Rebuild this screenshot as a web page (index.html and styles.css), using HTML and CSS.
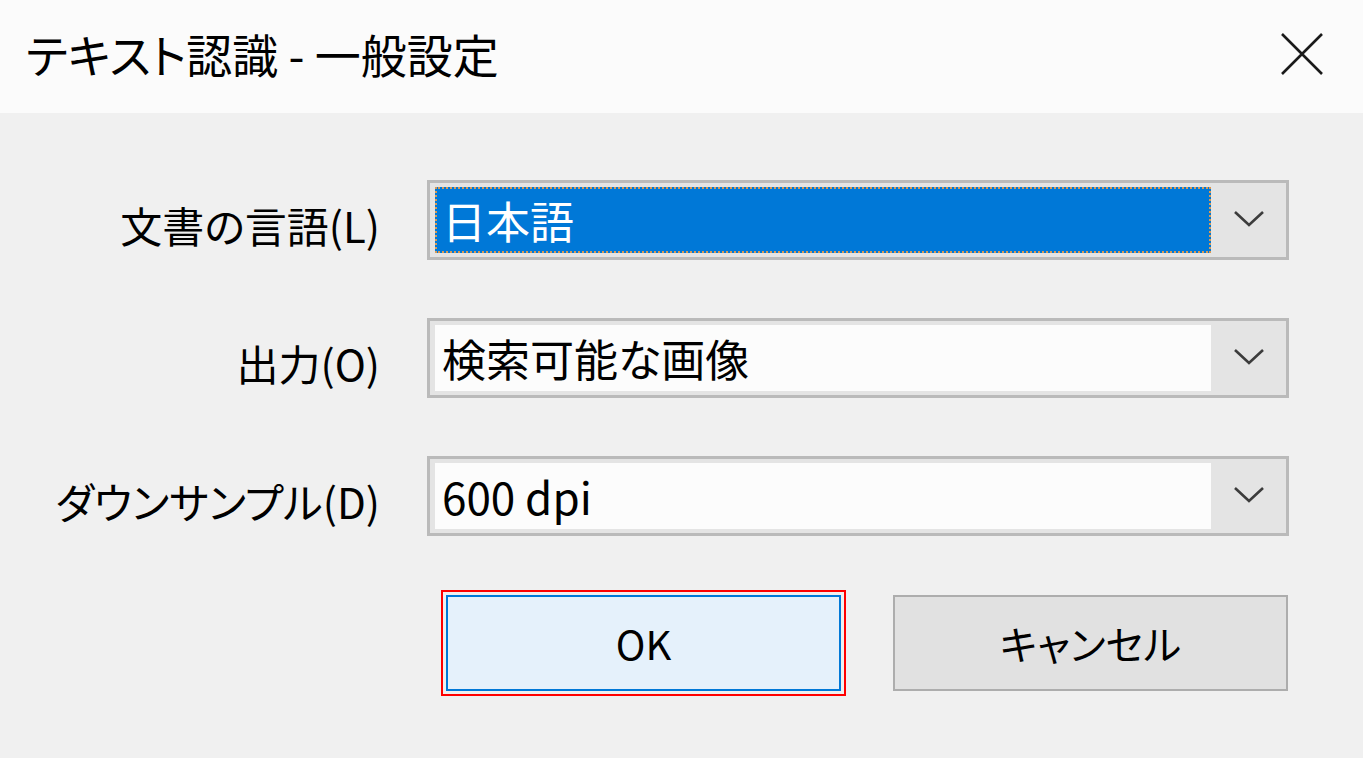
FILE: index.html
```html
<!DOCTYPE html>
<html lang="ja">
<head>
<meta charset="utf-8">
<title>テキスト認識 - 一般設定</title>
<link rel="stylesheet" href="styles.css">
</head>
<body>
<div class="titlebar">
  <div class="title">テキスト認識 - 一般設定</div>
  <div class="close">
    <svg width="42" height="42" viewBox="0 0 42 42"><path d="M1 1 L41 41 M41 1 L1 41" stroke="#1a1a1a" stroke-width="2.6" fill="none"/></svg>
  </div>
</div>
<div class="content">
  <div class="form">
    <div class="label">文書の言語(L)</div>
    <div class="combo">
      <div class="value selected">日本語</div>
      <div class="arrow"><svg width="32" height="18" viewBox="0 0 32 18"><path d="M2 2 L16 15 L30 2" stroke="#3c3c3c" stroke-width="2.6" fill="none"/></svg></div>
    </div>
    <div class="label">出力(O)</div>
    <div class="combo">
      <div class="value">検索可能な画像</div>
      <div class="arrow"><svg width="32" height="18" viewBox="0 0 32 18"><path d="M2 2 L16 15 L30 2" stroke="#3c3c3c" stroke-width="2.6" fill="none"/></svg></div>
    </div>
    <div class="label">ダウンサンプル(D)</div>
    <div class="combo">
      <div class="value">600 dpi</div>
      <div class="arrow"><svg width="32" height="18" viewBox="0 0 32 18"><path d="M2 2 L16 15 L30 2" stroke="#3c3c3c" stroke-width="2.6" fill="none"/></svg></div>
    </div>
  </div>
  <div class="buttons">
    <div class="btn ok">OK</div>
    <div class="btn cancel">キャンセル</div>
  </div>
</div>
</body>
</html>
```

FILE: styles.css
```css
html, body {
  margin: 0;
  padding: 0;
}
body {
  width: 1363px;
  height: 758px;
  overflow: hidden;
  background: #f0f0f0;
  font-family: "Noto Sans CJK JP", "Noto Sans", sans-serif;
  font-feature-settings: "palt";
  color: #000;
}
.titlebar {
  height: 113px;
  background: #fbfbfb;
  display: flex;
  align-items: center;
  justify-content: space-between;
  box-sizing: border-box;
  padding: 0 40px 0 26px;
}
.title {
  font-size: 46px;
  line-height: 1;
  padding-bottom: 8px;
}
.close {
  display: flex;
  width: 42px;
  height: 42px;
  margin-top: -6px;
}
.content {
  padding-top: 67px;
}
.form {
  display: grid;
  grid-template-columns: 380px 862px;
  grid-auto-rows: 80px;
  column-gap: 47px;
  row-gap: 58px;
}
.label {
  font-size: 42px;
  text-align: right;
  display: flex;
  align-items: center;
  justify-content: flex-end;
  padding-top: 10px;
  line-height: 1;
}
.combo {
  box-sizing: border-box;
  border: 3px solid #bababa;
  background: #e4e4e4;
  display: flex;
  align-items: stretch;
  padding: 4px 0 4px 5px;
}
.value {
  width: 776px;
  background: #fcfcfc;
  font-size: 44px;
  display: flex;
  align-items: center;
  padding-left: 7px;
  box-sizing: border-box;
  line-height: 1;
}
.value.selected {
  background: #0078d7;
  color: #fff;
  outline: 2px dotted #d89a55;
  outline-offset: -2px;
}
.arrow {
  flex: 1;
  display: flex;
  align-items: center;
  justify-content: center;
  padding-bottom: 2px;
}
.buttons {
  display: flex;
  margin: 59px 0 0 446px;
  gap: 52px;
}
.btn {
  box-sizing: border-box;
  height: 96px;
  width: 395px;
  display: flex;
  align-items: center;
  justify-content: center;
  font-size: 40px;
  line-height: 1;
}
.ok {
  background: #e5f1fb;
  border: 2px solid #0078d7;
  outline: 2px solid #ff0000;
  outline-offset: 3px;
}
.cancel {
  background: #e1e1e1;
  border: 2px solid #adadad;
}
```
